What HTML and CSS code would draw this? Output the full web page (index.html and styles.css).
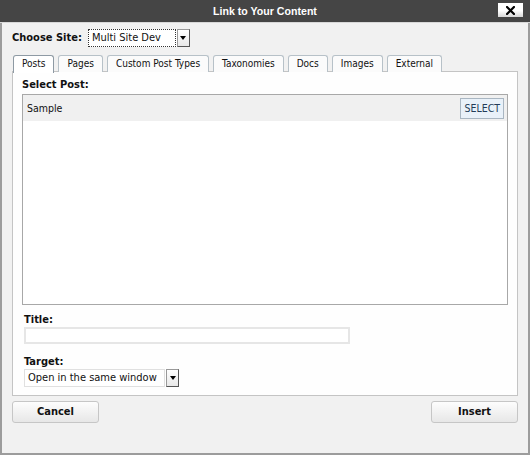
FILE: index.html
```html
<!DOCTYPE html>
<html>
<head>
<meta charset="utf-8">
<link rel="stylesheet" href="styles.css">
</head>
<body>
<div class="window">
  <div class="titlebar">
    <span class="title">Link to Your Content</span>
    <span class="close"><svg width="9" height="9" viewBox="0 0 9 9"><path d="M1 1 L8 8 M8 1 L1 8" stroke="#000" stroke-width="2.2" stroke-linecap="square"/></svg></span>
  </div>
  <div class="content">
    <div class="site-row">
      <span class="label">Choose Site:</span>
      <div class="select site-select">
        <span class="select-text focused">Multi Site Dev</span>
        <span class="select-arrow"><span class="tri"></span></span>
      </div>
    </div>
    <div class="tabs">
      <span class="tab active">Posts</span>
      <span class="tab">Pages</span>
      <span class="tab">Custom Post Types</span>
      <span class="tab">Taxonomies</span>
      <span class="tab">Docs</span>
      <span class="tab">Images</span>
      <span class="tab">External</span>
    </div>
    <div class="panel">
      <div class="label small">Select Post:</div>
      <div class="list">
        <div class="row">
          <span class="row-text">Sample</span>
          <span class="select-btn">SELECT</span>
        </div>
      </div>
      <div class="label small title-label">Title:</div>
      <div class="text-input"></div>
      <div class="label small target-label">Target:</div>
      <div class="select target-select">
        <span class="select-text">Open in the same window</span>
        <span class="select-arrow"><span class="tri"></span></span>
      </div>
    </div>
    <div class="buttons">
      <span class="button">Cancel</span>
      <span class="button">Insert</span>
    </div>
  </div>
</div>
</body>
</html>
```
FILE: styles.css
```css
html, body {
  margin: 0;
  padding: 0;
  background: #f1f1f1;
}
body {
  font-family: "DejaVu Sans Condensed", "DejaVu Sans", sans-serif;
  font-size: 10px;
  color: #111;
}
.window {
  width: 530px;
  height: 455px;
  box-sizing: border-box;
  border: 2px solid #9c9c9c;
  border-top: none;
  background: #f1f1f1;
  display: flex;
  flex-direction: column;
}
.titlebar {
  height: 22px;
  margin: 0 -2px;
  background: #454545;
  border-bottom: 1px solid #d8d8d8;
  display: flex;
  align-items: center;
  justify-content: center;
  position: relative;
  flex-shrink: 0;
}
.title {
  font-family: "Liberation Sans", Arial, sans-serif;
  font-weight: bold;
  font-size: 10.6px;
  color: #fff;
}
.close {
  position: absolute;
  left: 498px;
  top: 3px;
  width: 25px;
  height: 14px;
  background: linear-gradient(#ffffff, #ffffff 55%, #d6d6d6);
  display: flex;
  align-items: center;
  justify-content: center;
}
.content {
  padding: 5px 10px 0 10px;
  display: flex;
  flex-direction: column;
}
.site-row {
  display: flex;
  align-items: center;
  gap: 6px;
  height: 19px;
}
.label {
  font-weight: bold;
  font-size: 11px;
  line-height: 13px;
}
.select {
  display: flex;
  background: #fff;
  height: 18px;
  box-sizing: border-box;
}
.site-select {
  width: 102px;
}
.select-text {
  flex: 1;
  font-size: 11px;
  line-height: 16px;
  padding-left: 3px;
  border: 1px solid #bbb;
  white-space: nowrap;
  overflow: hidden;
}
.select-text.focused {
  border: 1px dotted #333;
}
.select-arrow {
  width: 11px;
  margin-left: 1px;
  border: 1px solid #999;
  border-right-color: #555;
  border-bottom-color: #555;
  background: linear-gradient(#fff, #e8e8e8);
  display: flex;
  align-items: center;
  justify-content: center;
}
.tri {
  width: 0;
  height: 0;
  border-left: 3px solid transparent;
  border-right: 3px solid transparent;
  border-top: 4px solid #000;
}
.tabs {
  display: flex;
  gap: 4px;
  margin-top: 8px;
  padding-left: 1px;
  height: 16px;
  position: relative;
  z-index: 1;
}
.tab {
  font-size: 10px;
  line-height: 14px;
  padding: 1px 8px 0 8px;
  border: 1px solid #b7c1c8;
  border-bottom: none;
  border-radius: 3px 3px 0 0;
  background: #fbfbfb;
  height: 15px;
}
.tab.active {
  background: #fff;
  border-color: #8e9aa4;
  height: 16px;
}
.panel {
  width: 506px;
  height: 325px;
  box-sizing: border-box;
  border: 1px solid #c4c4c4;
  background: #fefefe;
  padding: 6px 9px 0 9px;
  display: flex;
  flex-direction: column;
}
.list {
  margin-top: 3px;
  height: 211px;
  box-sizing: border-box;
  border: 1px solid #a8a8a8;
  background: #fff;
  flex-shrink: 0;
}
.row {
  height: 26px;
  background: #f0f0f0;
  display: flex;
  align-items: center;
  justify-content: space-between;
  padding: 0 3px 0 4px;
}
.row-text {
  font-size: 10.5px;
}
.select-btn {
  font-size: 10.5px;
  color: #233c58;
  background: #e9f1f9;
  border: 1px solid #a9b6c2;
  padding: 0 3px;
  height: 19px;
  line-height: 19px;
}
.title-label {
  margin-top: 9px;
  padding-left: 2px;
  line-height: 12px;
}
.text-input {
  margin-top: 1px;
  margin-left: 2px;
  width: 326px;
  height: 17px;
  box-sizing: border-box;
  border: 2px solid #e6e6e6;
  background: #fff;
  flex-shrink: 0;
}
.target-label {
  margin-top: 11px;
  padding-left: 2px;
}
.target-select {
  margin-top: 1px;
  margin-left: 2px;
  width: 155px;
  flex-shrink: 0;
}
.target-select .select-text {
  border-color: #e0e0e0;
}
.buttons {
  display: flex;
  justify-content: space-between;
  margin-top: 5px;
}
.button {
  width: 87px;
  height: 22px;
  box-sizing: border-box;
  border: 1px solid #c6c6c6;
  border-radius: 3px;
  background: linear-gradient(#fdfdfd, #e7e7e7);
  font-weight: bold;
  font-size: 11px;
  line-height: 20px;
  text-align: center;
}
```
